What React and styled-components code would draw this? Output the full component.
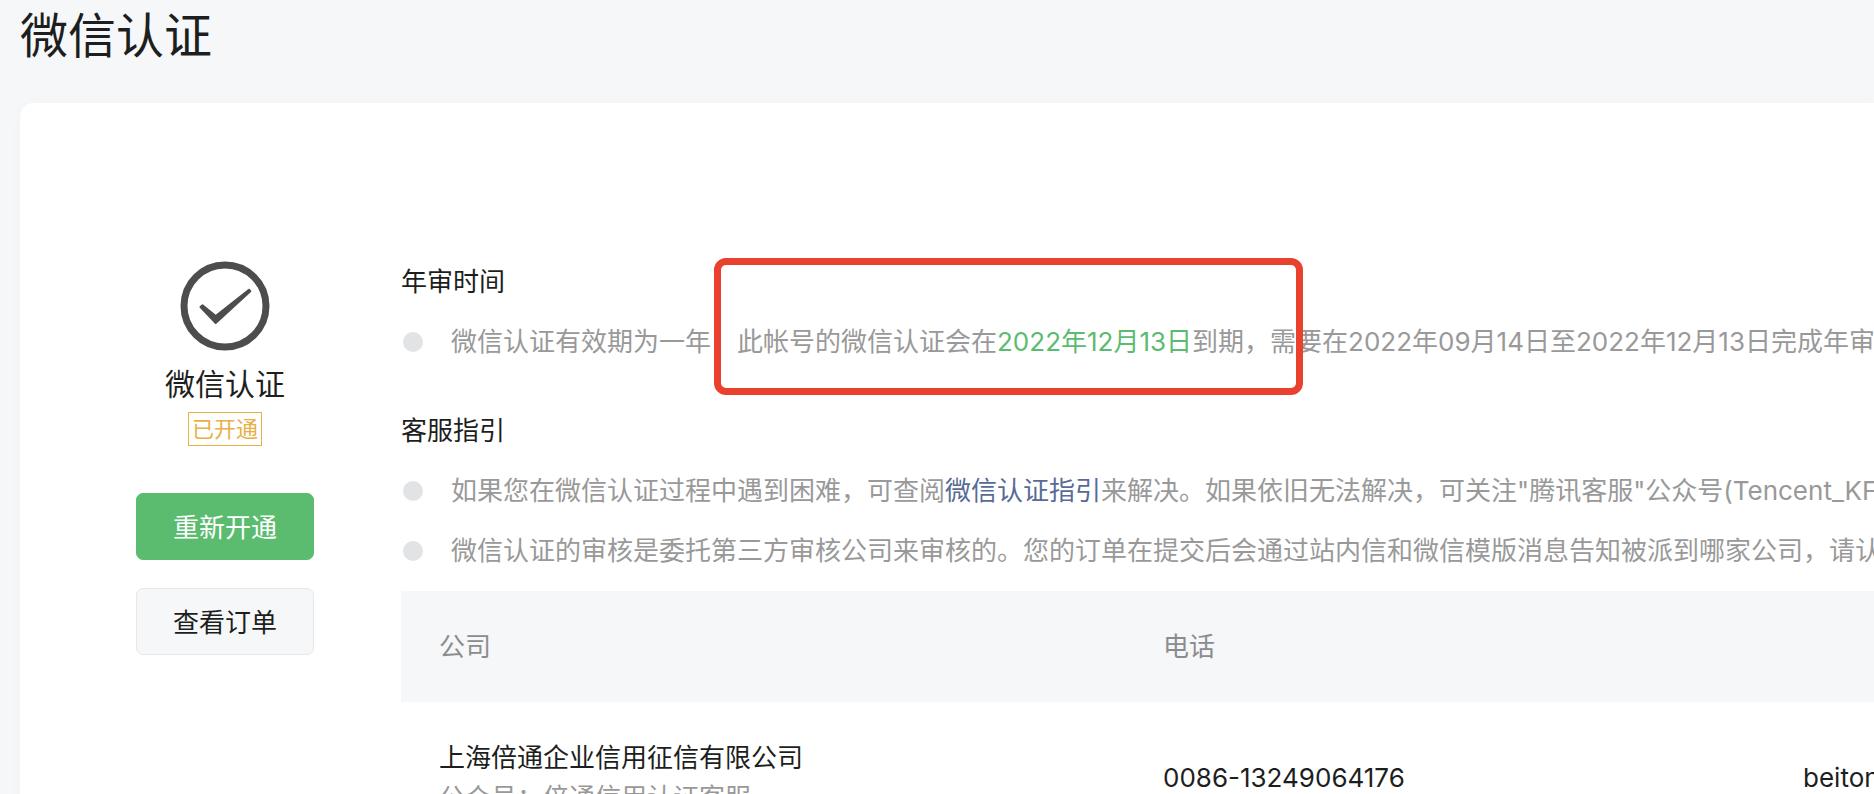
import React from 'react';
import styled, { createGlobalStyle } from 'styled-components';

const GlobalStyle = createGlobalStyle`
  * {
    box-sizing: border-box;
  }

  body {
    margin: 0;
    background-color: #f6f7f9;
    color: #1d1e20;
    font-family: Inter, "Noto Sans CJK SC", sans-serif;
    font-size: 26px;
    line-height: 40px;
  }
`;

const Page = styled.div`
  display: flex;
  flex-direction: column;
  height: 100vh;
  padding-left: 20px;
  overflow: hidden;
`;

const PageTitle = styled.h1`
  margin: 0 0 31px;
  font-weight: 400;
  font-size: 48px;
  line-height: 72px;
`;

const Card = styled.main`
  display: flex;
  flex: 1 0 auto;
  align-items: flex-start;
  padding: 158px 0 0 116px;
  border-top-left-radius: 14px;
  background-color: #ffffff;
  box-shadow: 0 0 16px rgba(0, 0, 0, 0.02);
`;

const Sidebar = styled.aside`
  display: flex;
  flex: none;
  flex-direction: column;
  align-items: center;
  width: 178px;
  margin-right: 87px;
`;

const StatusIcon = styled.svg`
  display: block;
  width: 90px;
  height: 90px;
`;

const StatusName = styled.h2`
  margin: 13px 0 8px;
  font-weight: 400;
  font-size: 30px;
  line-height: 40px;
`;

const StatusTag = styled.span`
  margin-bottom: 47px;
  padding: 0 3px;
  border: 1px solid #e8b145;
  color: #e8b145;
  font-size: 22px;
  line-height: 32px;
`;

const Button = styled.button`
  width: 100%;
  height: 67px;
  margin-bottom: 28px;
  padding: 0 0 2px;
  border: 1px solid ${(props) => (props.$primary ? '#5bbc6f' : '#e6e7e9')};
  border-radius: 7px;
  background-color: ${(props) => (props.$primary ? '#5bbc6f' : '#f6f7f9')};
  color: ${(props) => (props.$primary ? '#ffffff' : '#1d1e20')};
  font-family: inherit;
  font-size: 26px;
  cursor: pointer;
`;

const Content = styled.div`
  flex: 1;
  min-width: 0;
  padding-top: 1px;
`;

const SectionTitle = styled.h3`
  margin: 0 0 20px;
  font-weight: 400;
  font-size: 26px;
  line-height: 40px;
`;

const NoteList = styled.ul`
  display: grid;
  gap: 20px;
  margin: 0 0 ${(props) => (props.$last ? '20px' : '49px')};
  padding: 0;
  list-style: none;
`;

const Note = styled.li`
  position: relative;
  display: flex;
  align-items: center;
  gap: 28px;
  padding-left: 2px;
  color: #999999;
  white-space: nowrap;

  &::before {
    content: "";
    flex: none;
    width: 20px;
    height: 20px;
    border-radius: 50%;
    background-color: #e1e3e5;
  }
`;

const DueDate = styled.span`
  color: #5bbc6f;
`;

const GuideLink = styled.a`
  color: #576b95;
  text-decoration: none;
`;

const Highlight = styled.span`
  position: absolute;
  top: -64px;
  left: 313px;
  width: 589px;
  height: 137px;
  border: 7px solid #ea412e;
  border-radius: 12px;
  pointer-events: none;
`;

const Table = styled.table`
  width: 100%;
  border-collapse: collapse;
  table-layout: fixed;
  text-align: left;
  white-space: nowrap;
`;

const Column = styled.col`
  width: ${(props) => props.$width};
`;

const HeadCell = styled.th`
  height: 111px;
  padding: 0 38px;
  background-color: #f6f7f9;
  color: #8b8c8e;
  font-weight: 400;
`;

const Cell = styled.td`
  padding: 36px 38px;
`;

const Account = styled.div`
  color: #999999;
`;

const companies = [
  {
    name: '上海倍通企业信用征信有限公司',
    account: '公众号：倍通信用认证客服',
    phone: '0086-13249064176',
    email: 'beitong',
  },
];

const App = () => (
  <Page>
    <GlobalStyle />
    <PageTitle>微信认证</PageTitle>
    <Card>
      <Sidebar>
        <StatusIcon viewBox="0 0 90 90" aria-hidden="true">
          <circle cx="45" cy="45" r="41" fill="none" stroke="#4c4d4f" strokeWidth="7" />
          <path
            d="M20.5 46 L22.5 44.3 L35.7 55 L69 28.7 L70.3 30.2 L35.7 62 Z"
            fill="#4c4d4f"
            stroke="#4c4d4f"
            strokeWidth="2"
            strokeLinejoin="round"
          />
        </StatusIcon>
        <StatusName>微信认证</StatusName>
        <StatusTag>已开通</StatusTag>
        <Button type="button" $primary>重新开通</Button>
        <Button type="button">查看订单</Button>
      </Sidebar>
      <Content>
        <SectionTitle>年审时间</SectionTitle>
        <NoteList>
          <Note>
            <span>
              微信认证有效期为一年，此帐号的微信认证会在<DueDate>2022年12月13日</DueDate>到期，需要在2022年09月14日至2022年12月13日完成年审
            </span>
            <Highlight />
          </Note>
        </NoteList>
        <SectionTitle>客服指引</SectionTitle>
        <NoteList $last>
          <Note>
            <span>
              如果您在微信认证过程中遇到困难，可查阅<GuideLink href="#guide">微信认证指引</GuideLink>来解决。如果依旧无法解决，可关注"腾讯客服"公众号(Tencent_KF)
            </span>
          </Note>
          <Note>
            <span>
              微信认证的审核是委托第三方审核公司来审核的。您的订单在提交后会通过站内信和微信模版消息告知被派到哪家公司，请认
            </span>
          </Note>
        </NoteList>
        <Table>
          <colgroup>
            <Column $width="724px" />
            <Column $width="640px" />
            <Column />
          </colgroup>
          <thead>
            <tr>
              <HeadCell scope="col">公司</HeadCell>
              <HeadCell scope="col">电话</HeadCell>
              <HeadCell scope="col" />
            </tr>
          </thead>
          <tbody>
            {companies.map((company) => (
              <tr key={company.name}>
                <Cell>
                  {company.name}
                  <Account>{company.account}</Account>
                </Cell>
                <Cell>{company.phone}</Cell>
                <Cell>{company.email}</Cell>
              </tr>
            ))}
          </tbody>
        </Table>
      </Content>
    </Card>
  </Page>
);

export default App;
